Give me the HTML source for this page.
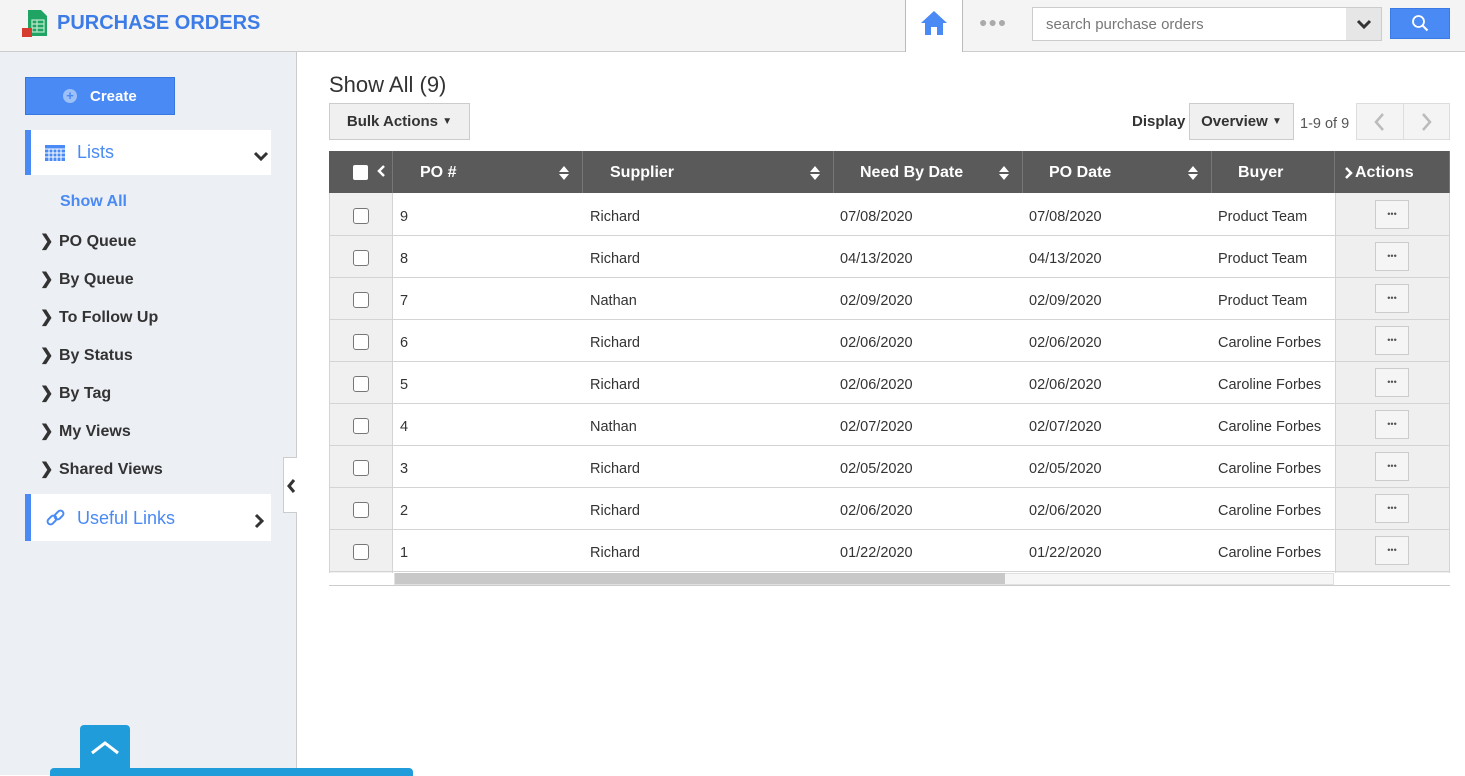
<!DOCTYPE html>
<html><head><style>
*{box-sizing:border-box;margin:0;padding:0}
body{width:1465px;height:775px;overflow:hidden;font-family:"Liberation Sans",Arial,sans-serif;background:#fff;position:relative;color:#333}
.a{position:absolute}
.hdr{left:0;top:0;width:1465px;height:52px;background:#f4f4f4;border-bottom:1px solid #ccc}
.side{left:0;top:52px;width:297px;height:723px;background:#eceff4;border-right:1px solid #ccc}
.nav{left:40px;font-size:16px;font-weight:bold;color:#333}
.nav b{display:inline-block;width:19px}
.btn{background:#f0f0f0;border:1px solid #ccc;font-size:15px;font-weight:bold;color:#333;display:flex;align-items:center;justify-content:center}
.th{top:151px;height:42px;background:#5a5a5a;color:#fff;font-weight:bold;font-size:16px;display:flex;align-items:center;border-right:1px solid #777;padding-top:2px}
.sort{position:absolute;right:12px;top:14px}
.row{left:329px;width:1121px;height:42px;border-bottom:1px solid #d4d4d4;font-size:14.5px}
.row span{position:absolute;top:15px}
.cb{position:absolute;left:24px;top:14px;width:16px;height:16px;border:1px solid #777;border-radius:3px;background:#fff}
.dots{position:absolute;left:1046px;top:6px;width:34px;height:29px;border:1px solid #ccc;background:#f5f5f5;font-size:9px;text-align:center;line-height:26px;color:#555;font-style:normal}
</style></head><body>
<div class="a hdr"></div>
<svg class="a" style="left:20px;top:9px" width="30" height="30" viewBox="0 0 30 30"><path d="M8 1h13l6 6v20H8z" fill="#1fa463"/><rect x="12" y="11" width="12" height="12" fill="none" stroke="#bfe9cf" stroke-width="1.2"/><path d="M12 15h12M12 19h12M17 11v12" stroke="#bfe9cf" stroke-width="1.2"/><rect x="2" y="19" width="10" height="9" fill="#d63b30"/></svg>
<div class="a" style="left:57px;top:12px;font-size:20px;font-weight:bold;color:#3d7be6">PURCHASE ORDERS</div>
<div class="a" style="left:905px;top:0;width:58px;height:52px;background:#fff;border-left:1px solid #bbb;border-right:1px solid #bbb"></div>
<svg class="a" style="left:919px;top:9px" width="30" height="28" viewBox="0 0 30 28"><path d="M15 2L2 14h4v12h6v-8h6v8h6V14h4z" fill="#4a8af4"/></svg>
<div class="a" style="left:979px;top:14px;font-size:14px;color:#aaa;letter-spacing:1px">●●●</div>
<div class="a" style="left:1032px;top:7px;width:350px;height:34px;background:#fff;border:1px solid #ccc"></div>
<div class="a" style="left:1046px;top:16px;font-size:15px;color:#777">search purchase orders</div>
<div class="a" style="left:1346px;top:8px;width:35px;height:32px;background:#e6e6e6"></div>
<svg class="a" style="left:1356px;top:17px" width="16" height="14"><path d="M2 4l6 6 6-6" stroke="#333" stroke-width="3" fill="none"/></svg>
<div class="a" style="left:1390px;top:8px;width:60px;height:31px;background:#4a8af4;border:1px solid #3a7ae4"></div>
<svg class="a" style="left:1411px;top:14px" width="18" height="18"><circle cx="7.5" cy="7.5" r="5.5" stroke="#fff" stroke-width="1.8" fill="none"/><path d="M11.5 11.5l5 5" stroke="#fff" stroke-width="2"/></svg>

<div class="a side"></div>
<div class="a" style="left:25px;top:77px;width:150px;height:38px;background:#4a8af4;border:1px solid #3877e0;color:#fff;font-weight:bold;font-size:15px;line-height:38px;padding-left:64px">Create</div>
<div class="a" style="left:63px;top:89px;width:14px;height:14px;border-radius:50%;background:#9cc0f7;color:#4a8af4;font-size:13px;font-weight:bold;line-height:14px;text-align:center">+</div>
<div class="a" style="left:25px;top:130px;width:246px;height:45px;background:#fff;border-left:6px solid #4a8af4"></div>
<svg class="a" style="left:45px;top:145px" width="20" height="16"><rect x="0" y="0" width="20" height="16" fill="#4a8af4"/><path d="M0 4h20M0 8h20M0 12h20M4 4v12M8 4v12M12 4v12M16 4v12" stroke="#fff" stroke-width="1"/></svg>
<div class="a" style="left:77px;top:142px;font-size:18px;color:#4a8af4">Lists</div>
<svg class="a" style="left:253px;top:150px" width="16" height="12"><path d="M2 3l6 6 6-6" stroke="#333" stroke-width="3" fill="none"/></svg>
<div class="a" style="left:60px;top:193px;font-size:16px;font-weight:bold;color:#4a8af4">Show All</div>
<div class="a nav" style="top:231px"><b>❯</b>PO Queue</div>
<div class="a nav" style="top:269px"><b>❯</b>By Queue</div>
<div class="a nav" style="top:307px"><b>❯</b>To Follow Up</div>
<div class="a nav" style="top:345px"><b>❯</b>By Status</div>
<div class="a nav" style="top:383px"><b>❯</b>By Tag</div>
<div class="a nav" style="top:421px"><b>❯</b>My Views</div>
<div class="a nav" style="top:459px"><b>❯</b>Shared Views</div>
<div class="a" style="left:25px;top:494px;width:246px;height:47px;background:#fff;border-left:6px solid #4a8af4"></div>
<svg class="a" style="left:46px;top:508px" width="20" height="20" viewBox="0 0 20 20"><g fill="none" stroke="#4a8af4" stroke-width="2"><rect x="1" y="9" width="10" height="6" rx="3" transform="rotate(-45 6 12)"/><rect x="8" y="4" width="10" height="6" rx="3" transform="rotate(-45 13 7)"/></g></svg>
<div class="a" style="left:77px;top:508px;font-size:18px;color:#4a8af4">Useful Links</div>
<svg class="a" style="left:253px;top:513px" width="12" height="16"><path d="M3 2l6 6-6 6" stroke="#333" stroke-width="3" fill="none"/></svg>
<div class="a" style="left:283px;top:457px;width:14px;height:56px;background:#fff;border:1px solid #ccc;border-right:none"></div>
<svg class="a" style="left:286px;top:478px" width="10" height="16"><path d="M8 2L3 8l5 6" stroke="#333" stroke-width="3" fill="none"/></svg>
<div class="a" style="left:80px;top:725px;width:50px;height:50px;background:#219cdb;border-radius:4px 4px 0 0"></div>
<svg class="a" style="left:90px;top:740px" width="30" height="16"><path d="M2 13L15 3l13 10" stroke="#fff" stroke-width="3" fill="none"/></svg>
<div class="a" style="left:50px;top:768px;width:363px;height:8px;background:#219cdb;border-radius:4px 4px 0 0"></div>

<div class="a" style="left:329px;top:72px;font-size:22px;color:#333">Show All (9)</div>
<div class="a btn" style="left:329px;top:103px;width:141px;height:37px">Bulk Actions&nbsp;<span style="font-size:10px">▼</span></div>
<div class="a" style="left:1132px;top:113px;font-size:15px;font-weight:bold">Display</div>
<div class="a btn" style="left:1189px;top:103px;width:105px;height:37px">Overview&nbsp;<span style="font-size:10px">▼</span></div>
<div class="a" style="left:1300px;top:116px;font-size:14.5px;color:#555">1-9 of 9</div>
<div class="a" style="left:1356px;top:103px;width:94px;height:37px;background:#f4f4f4;border:1px solid #ddd"></div>
<div class="a" style="left:1403px;top:103px;width:1px;height:37px;background:#ddd"></div>
<svg class="a" style="left:1372px;top:112px" width="14" height="20"><path d="M11 2L4 10l7 8" stroke="#bbb" stroke-width="2.5" fill="none"/></svg>
<svg class="a" style="left:1420px;top:112px" width="14" height="20"><path d="M3 2l7 8-7 8" stroke="#bbb" stroke-width="2.5" fill="none"/></svg>

<div class="a th" style="left:329px;width:64px"><span style="position:absolute;left:24px;top:14px;width:15px;height:15px;background:#fff;border-radius:2px"></span><svg style="position:absolute;left:47px;top:13px" width="10" height="14"><path d="M8 2L3 7l5 5" stroke="#fff" stroke-width="2.5" fill="none"/></svg></div>
<div class="a th" style="left:393px;width:190px;padding-left:27px">PO #<svg class="sort" width="12" height="16"><path d="M1 7l5-6 5 6zM1 9l5 6 5-6z" fill="#fff"/></svg></div>
<div class="a th" style="left:583px;width:251px;padding-left:27px">Supplier<svg class="sort" width="12" height="16"><path d="M1 7l5-6 5 6zM1 9l5 6 5-6z" fill="#fff"/></svg></div>
<div class="a th" style="left:834px;width:189px;padding-left:26px">Need By Date<svg class="sort" width="12" height="16"><path d="M1 7l5-6 5 6zM1 9l5 6 5-6z" fill="#fff"/></svg></div>
<div class="a th" style="left:1023px;width:189px;padding-left:26px">PO Date<svg class="sort" width="12" height="16"><path d="M1 7l5-6 5 6zM1 9l5 6 5-6z" fill="#fff"/></svg></div>
<div class="a th" style="left:1212px;width:123px;padding-left:26px">Buyer</div>
<div class="a th" style="left:1335px;width:115px;padding-left:8px"><svg width="12" height="14"><path d="M3 2l5 5-5 5" stroke="#fff" stroke-width="2.5" fill="none"/></svg>Actions</div>
<div class="a" style="left:329px;top:193px;width:64px;height:380px;background:#f0f0f0;border-left:1px solid #d4d4d4;border-right:1px solid #d4d4d4"></div>
<div class="a" style="left:1335px;top:193px;width:115px;height:380px;background:#efefef;border-left:1px solid #d4d4d4;border-right:1px solid #d4d4d4"></div>

<div class="a row" style="top:194px"><i class="cb"></i><span style="left:71px">9</span><span style="left:261px">Richard</span><span style="left:511px">07/08/2020</span><span style="left:700px">07/08/2020</span><span style="left:889px">Product Team</span><i class="dots">•••</i></div>
<div class="a row" style="top:236px"><i class="cb"></i><span style="left:71px">8</span><span style="left:261px">Richard</span><span style="left:511px">04/13/2020</span><span style="left:700px">04/13/2020</span><span style="left:889px">Product Team</span><i class="dots">•••</i></div>
<div class="a row" style="top:278px"><i class="cb"></i><span style="left:71px">7</span><span style="left:261px">Nathan</span><span style="left:511px">02/09/2020</span><span style="left:700px">02/09/2020</span><span style="left:889px">Product Team</span><i class="dots">•••</i></div>
<div class="a row" style="top:320px"><i class="cb"></i><span style="left:71px">6</span><span style="left:261px">Richard</span><span style="left:511px">02/06/2020</span><span style="left:700px">02/06/2020</span><span style="left:889px">Caroline Forbes</span><i class="dots">•••</i></div>
<div class="a row" style="top:362px"><i class="cb"></i><span style="left:71px">5</span><span style="left:261px">Richard</span><span style="left:511px">02/06/2020</span><span style="left:700px">02/06/2020</span><span style="left:889px">Caroline Forbes</span><i class="dots">•••</i></div>
<div class="a row" style="top:404px"><i class="cb"></i><span style="left:71px">4</span><span style="left:261px">Nathan</span><span style="left:511px">02/07/2020</span><span style="left:700px">02/07/2020</span><span style="left:889px">Caroline Forbes</span><i class="dots">•••</i></div>
<div class="a row" style="top:446px"><i class="cb"></i><span style="left:71px">3</span><span style="left:261px">Richard</span><span style="left:511px">02/05/2020</span><span style="left:700px">02/05/2020</span><span style="left:889px">Caroline Forbes</span><i class="dots">•••</i></div>
<div class="a row" style="top:488px"><i class="cb"></i><span style="left:71px">2</span><span style="left:261px">Richard</span><span style="left:511px">02/06/2020</span><span style="left:700px">02/06/2020</span><span style="left:889px">Caroline Forbes</span><i class="dots">•••</i></div>
<div class="a row" style="top:530px"><i class="cb"></i><span style="left:71px">1</span><span style="left:261px">Richard</span><span style="left:511px">01/22/2020</span><span style="left:700px">01/22/2020</span><span style="left:889px">Caroline Forbes</span><i class="dots">•••</i></div>
<div class="a" style="left:394px;top:573px;width:940px;height:12px;background:#f6f6f6;border:1px solid #e0e0e0"></div>
<div class="a" style="left:395px;top:573px;width:610px;height:11px;background:#c8c8c8"></div>
<div class="a" style="left:329px;top:585px;width:1121px;height:1px;background:#ccc"></div>
</body></html>
